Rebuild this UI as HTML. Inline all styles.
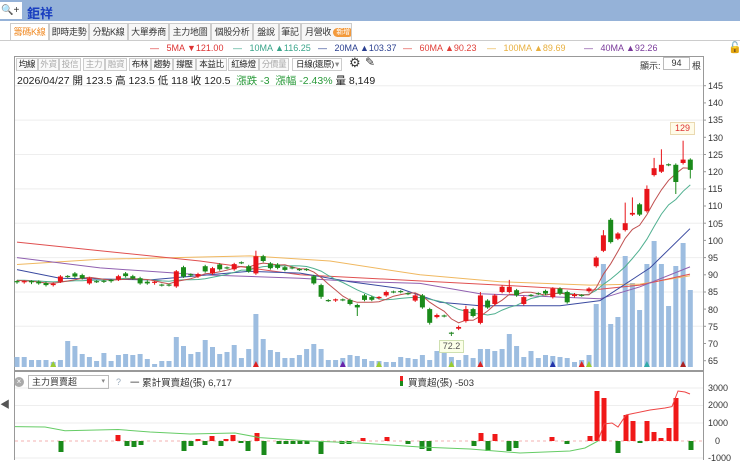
<!DOCTYPE html>
<html><head><meta charset="utf-8">
<style>
*{margin:0;padding:0;box-sizing:border-box}
body{width:740px;height:460px;overflow:hidden;background:#fff;font-family:"Liberation Sans","Noto Sans CJK TC",sans-serif;position:relative;color:#333}
.abs{position:absolute;white-space:nowrap}
#top{left:0;top:0;width:740px;height:21px;background:#95b2d8}
#mag{left:0;top:2px;width:22px;height:17px;background:#fff;font-size:10px;line-height:17px;padding-left:1px;color:#333;overflow:hidden}
#name{left:27px;top:3px;font-size:13px;font-weight:bold;color:#1a3fc0}
.tab{position:absolute;top:23px;height:18px;border:1px solid #ccc;border-bottom:none;background:#f7f7f7;font-size:9px;line-height:17px;text-align:center;color:#333;white-space:nowrap;overflow:hidden;letter-spacing:-0.3px}
.tab.sel{background:#fff;color:#f08a24}
#tabline{left:0;top:40px;width:740px;height:1px;background:#ccc}
.leg{position:absolute;top:43px;font-size:9px;white-space:nowrap}
#box{left:14px;top:56px;width:690px;height:315px;border:1px solid #999;border-right:none}
.btn{position:absolute;top:58px;height:13px;border:1px solid #ccc;font-size:8.5px;line-height:11px;text-align:center;color:#222;background:#fafafa;white-space:nowrap;overflow:hidden;letter-spacing:-0.3px}
.btn.g{color:#aaa}
#info{left:17px;top:73px;font-size:10.5px;white-space:nowrap;color:#222}
.ax{position:absolute;left:708px;font-size:9px;color:#333}
</style></head><body>
<div id="top" class="abs"></div>
<div id="mag" class="abs">&#128269;+</div>
<div id="name" class="abs">鉅祥</div>
<div class="tab sel" style="left:10px;width:39px">籌碼K線</div>
<div class="tab" style="left:49px;width:40px">即時走勢</div>
<div class="tab" style="left:89px;width:39px">分點K線</div>
<div class="tab" style="left:128px;width:41px">大單券商</div>
<div class="tab" style="left:169px;width:42px">主力地圖</div>
<div class="tab" style="left:211px;width:42px">個股分析</div>
<div class="tab" style="left:253px;width:26px">盤說</div>
<div class="tab" style="left:279px;width:22px">筆記</div>
<div class="tab" style="left:301px;width:51px;text-align:left;padding-left:3px">月營收 <span style="display:inline-block;background:#f39a3c;color:#fff;border-radius:6px;font-size:7px;line-height:9px;padding:0 3px;vertical-align:1px">新增</span></div>
<div id="tabline" class="abs"></div>

<div class="leg" style="left:150px;color:#d33">—&nbsp;&nbsp; 5MA ▼121.00</div>
<div class="leg" style="left:233px;color:#3aa58a">—&nbsp;&nbsp; 10MA ▲116.25</div>
<div class="leg" style="left:318px;color:#2a3f8f">—&nbsp;&nbsp; 20MA ▲103.37</div>
<div class="leg" style="left:403px;color:#e0403a">—&nbsp;&nbsp; 60MA ▲90.23</div>
<div class="leg" style="left:487px;color:#e8b040">—&nbsp;&nbsp; 100MA ▲89.69</div>
<div class="leg" style="left:584px;color:#7a3a9a">—&nbsp;&nbsp; 40MA ▲92.26</div>
<div class="abs" style="left:728px;top:41px;font-size:11px">🔓</div>

<div id="box" class="abs"></div>
<div class="btn" style="left:16px;width:22px">均線</div>
<div class="btn g" style="left:38px;width:21px">外資</div>
<div class="btn g" style="left:59px;width:22px">投信</div>
<div class="btn g" style="left:83px;width:22px">主力</div>
<div class="btn g" style="left:105px;width:22px">融資</div>
<div class="btn" style="left:129px;width:22px">布林</div>
<div class="btn" style="left:151px;width:22px">趨勢</div>
<div class="btn" style="left:173px;width:23px">撐壓</div>
<div class="btn" style="left:196px;width:31px">本益比</div>
<div class="btn" style="left:228px;width:31px">紅綠燈</div>
<div class="btn g" style="left:259px;width:30px">分價量</div>
<div class="btn" style="left:292px;width:50px;text-align:left;padding-left:3px;background:#fff">日線(還原)<span style="float:right;color:#888;margin-right:2px">▾</span></div>
<div class="abs" style="left:349px;top:55px;font-size:13px">⚙</div>
<div class="abs" style="left:365px;top:55px;font-size:12px">✎</div>
<div class="abs" style="left:640px;top:59px;font-size:9px">顯示:</div>
<div class="abs" style="left:663px;top:57px;width:27px;height:13px;border:1px solid #bbb;font-size:9px;text-align:center;line-height:11px">94</div>
<div class="abs" style="left:692px;top:59px;font-size:9px">根</div>
<div id="info" class="abs">2026/04/27 開 123.5 高 123.5 低 118 收 120.5 <span style="color:#2a9a3a">&nbsp;漲跌 -3 &nbsp;漲幅 -2.43%</span> 量 8,149</div>

<svg id="sv" class="abs" style="left:0;top:0" width="740" height="460"></svg>

<div class="abs" style="left:14px;top:377px;width:10px;height:10px;border-radius:5px;background:#aaa;color:#fff;font-size:8px;line-height:10px;text-align:center">×</div>
<div class="abs" style="left:28px;top:375px;width:81px;height:14px;border:1px solid #bbb;font-size:9px;line-height:12px;padding-left:3px">主力買賣超<span style="float:right;color:#888;margin-right:3px;font-size:7px">▾</span></div>
<div class="abs" style="left:116px;top:377px;font-size:9px;color:#9ab">?</div>
<div class="abs" style="left:130px;top:375px;font-size:9.5px">一 累計買賣超(張) 6,717</div>
<div class="abs" style="left:400px;top:376px;width:3px;height:5px;background:#e22"></div>
<div class="abs" style="left:400px;top:381px;width:3px;height:5px;background:#1a8a1a"></div>
<div class="abs" style="left:408px;top:375px;font-size:9.5px">買賣超(張) -503</div>
<div class="abs" style="left:0;top:396px;font-size:10px;color:#555">◀</div>

<div class="ax" style="top:81px">145</div>
<div class="ax" style="top:98px">140</div>
<div class="ax" style="top:115px">135</div>
<div class="ax" style="top:133px">130</div>
<div class="ax" style="top:150px">125</div>
<div class="ax" style="top:167px">120</div>
<div class="ax" style="top:184px">115</div>
<div class="ax" style="top:201px">110</div>
<div class="ax" style="top:219px">105</div>
<div class="ax" style="top:236px">100</div>
<div class="ax" style="top:253px">95</div>
<div class="ax" style="top:270px">90</div>
<div class="ax" style="top:287px">85</div>
<div class="ax" style="top:305px">80</div>
<div class="ax" style="top:322px">75</div>
<div class="ax" style="top:339px">70</div>
<div class="ax" style="top:356px">65</div>
<div class="ax" style="top:383px">3000</div>
<div class="ax" style="top:400px">2000</div>
<div class="ax" style="top:418px">1000</div>
<div class="ax" style="top:436px;left:715px">0</div>
<div class="ax" style="top:453px">-1000</div>
<div class="abs" style="left:670px;top:122px;width:25px;height:13px;border:1px solid #ead9b0;background:#fffbe8;color:#d33;font-size:9px;text-align:center;line-height:11px">129</div>
<div class="abs" style="left:439px;top:340px;width:25px;height:13px;border:1px solid #cfe0b0;background:#fbffe8;color:#555;font-size:9px;text-align:center;line-height:11px">72.2</div>

<script>
var S=document.getElementById('sv'),h='';
function Y(p){return 137.3+(130-p)*3.437}
function X(i){return 17+7.24*i}
h+='<line x1="703.5" y1="56" x2="703.5" y2="460" stroke="#999"/>';
for(var p=75;p<=145;p+=10)h+='<line x1="15" x2="703" y1="'+Y(p).toFixed(1)+'" y2="'+Y(p).toFixed(1)+'" stroke="#eee"/>';
for(var p=65;p<=145;p+=5)h+='<line x1="703" x2="706" y1="'+Y(p).toFixed(1)+'" y2="'+Y(p).toFixed(1)+'" stroke="#999"/>';
h+='<line x1="14.5" y1="372" x2="14.5" y2="460" stroke="#999"/>';
h+='<line x1="14" x2="703" y1="371.5" y2="371.5" stroke="#999"/>';
[388,405.5,423,458].forEach(function(y){h+='<line x1="15" x2="703" y1="'+y+'" y2="'+y+'" stroke="#eee"/>'});
var D=[[88,87.8],[87.8,88],[88,87.7],[88,87.5],[87.6,87],[87,87.4],[88,89.5],[89.5,89.5],[90.4,89.5],[89.9,89],[87.5,89],[88,88],[88,88.1],[88.3,88.1],[88.6,89.6],[90.4,89.6],[89.6,88.9],[89,87.5],[88,87.5],[87.5,87.8],[87,87],[87,87],[86.6,91],[92.2,89.5],[90,89.8],[89.5,90.2],[92.5,91],[90.4,91.9],[93,91.6],[92,92],[91.6,93.1],[93.5,93.5],[92.5,91],[90.4,95.4],[95.4,94],[93.3,91.9],[93,92],[92.2,91.4],[92,92],[91.5,91.5],[91.5,91.5],[89.6,87.5],[87,83.6],[82.5,82.5],[82.5,82.7],[82.7,82.7],[82.7,81.5],[81.2,80.5],[84,82.7],[83.5,82.7],[83.2,83.4],[84,85],[85,85],[85,85.1],[84.5,84.5],[82.5,84],[84,80.5],[80,76],[77.7,78.3],[78,78],[73,73],[74.3,74.8],[76.5,80],[80,78],[76,84],[82.5,80.5],[81.5,84],[85,86.5],[85,86.5],[85.5,84],[81.5,83.5],[84,84],[84.5,84.5],[85.3,84.5],[83.5,86],[86,84.5],[85,82],[83.8,84.3],[84,84],[85.2,86],[92.5,95],[97,101.5],[106,99.5],[100.5,102],[103,105],[107.5,108],[110.5,107.5],[108.5,115],[119,121],[120,122],[122,122],[122,117],[122.5,123.5],[123.5,120.5]];
var HI={92:129,88:124,89:126.5,87:116,84:111,85:112.5,33:97,68:88.5,81:103,82:106.5,62:81,64:85},LO={91:113.5,60:72.2,93:118,47:78,42:83,57:75.5};
var V=[10,10,7,7,7,5,7,26,21,13,10,6,14,6,12,13,12,13,8,3,6,6,30,21,13,15,27,20,13,15,22,9,18,53,28,17,15,9,9,12,18,23,18,7,7,9,12,11,8,6,6,5,5,10,9,8,12,7,16,19,10,7,12,9,18,18,16,18,33,21,10,16,9,12,11,10,9,5,7,12,63,103,43,50,111,84,57,103,126,103,61,101,124,77];
for(var i=0;i<94;i++){var x=X(i);h+='<rect x="'+(x-2.5).toFixed(1)+'" y="'+(367-V[i])+'" width="5" height="'+V[i]+'" fill="#9dbde0"/>';}
[[5,'#9c3'],[33,'#d22'],[50,'#9c3'],[60,'#9c3'],[64,'#d22'],[74,'#23a'],[78,'#d22'],[79,'#9c3'],[87,'#3aa'],[92,'#a22'],[45,'#62a']].forEach(function(m){var x=X(m[0]);h+='<polygon points="'+(x-3)+',367 '+(x+3)+',367 '+x+',361" fill="'+m[1]+'"/>'});
function pl(pts,c){h+='<polyline fill="none" stroke="'+c+'" stroke-width="1" points="'+pts.map(function(q){return q[0]+','+Y(q[1]).toFixed(1)}).join(' ')+'"/>'}
pl([[17,93],[100,94.5],[250,95.5],[330,94],[420,90],[500,88],[590,87],[640,87.3],[690,89.7]],'#f0b860');
pl([[17,99.5],[100,97],[200,94],[300,90],[400,88.5],[500,87],[590,85.5],[640,87],[690,90.2]],'#e05050');
pl([[17,95],[100,92],[200,90],[300,89],[360,88],[420,87.5],[480,84.5],[560,83.5],[600,83],[640,86.5],[690,92.3]],'#9060b0');
pl([[17,91.5],[60,89],[150,88.5],[250,91],[300,90.5],[350,88],[400,86],[440,82],[480,81],[560,81],[600,82.5],[650,92],[690,103.4]],'#3a4aa0');
var C=D.map(function(d){return d[1]});
function ma(n){var r=[];for(var i=0;i<94;i++){var s=0;for(var k=0;k<n;k++){var j=i-k;s+=j<0?88.5:C[j];}r.push([X(i).toFixed(1),s/n]);}return r}
pl(ma(10),'#50b090');pl(ma(5),'#c05050');
for(var i=0;i<94;i++){var o=D[i][0],c=D[i][1],x=X(i),up=c>o,eq=Math.abs(c-o)<0.15;var col=eq?'#2a8a2a':(up?'#e8141a':'#1a8a1a');
var hi=HI[i]||Math.max(o,c)+0.4,lo=LO[i]||Math.min(o,c)-0.4;
h+='<line x1="'+x.toFixed(1)+'" x2="'+x.toFixed(1)+'" y1="'+Y(hi).toFixed(1)+'" y2="'+Y(lo).toFixed(1)+'" stroke="'+col+'"/>';
var t=Y(Math.max(o,c)),b=Y(Math.min(o,c));if(b-t<1.2){t-=0.6;b=t+1.2}
h+='<rect x="'+(x-2.5).toFixed(1)+'" y="'+t.toFixed(1)+'" width="5" height="'+(b-t).toFixed(1)+'" fill="'+col+'"/>';}
h+='<line x1="15" x2="703" y1="441" y2="441" stroke="#f3b0b0" stroke-dasharray="3,3"/>';
var B=[[61,-11],[118,6],[127,-5],[134,-6],[141,-4],[184,-10],[191,-5],[198,2],[205,-4],[212,5],[221,-5],[226,2],[233,6],[241,-2],[248,-10],[257,8],[264,-14],[279,-3],[286,-3],[293,-3],[300,-3],[307,-3],[321,-13],[342,-3],[349,-3],[363,3],[387,4],[408,-3],[422,-8],[429,-10],[474,-5],[481,8],[488,-10],[495,7],[509,-10],[516,-7],[552,4],[567,-3],[590,5],[597,50],[604,43],[618,-12],[626,26],[633,20],[640,-2],[647,20],[654,9],[661,3],[669,13],[676,43],[691,-9]];
B.forEach(function(b){var v=b[1];h+='<rect x="'+(b[0]-2.5)+'" y="'+(v>0?441-v:441)+'" width="5" height="'+Math.abs(v)+'" fill="'+(v>0?'#f01818':'#1a8a1a')+'"/>'});
h+='<polyline fill="none" stroke="#6c6" stroke-width="1" points="15,426.6 45,427 65,430.7 118,429.5 150,432 190,434 235,433 260,437.6 310,441 360,443 420,447 470,449 520,453 570,451 585,448 598,441"/>';
h+='<polyline fill="none" stroke="#e44" stroke-width="1" points="598,441 604,424 612,423 618,427 626,415 650,410 665,408 672,406.6 678,391 685,392 690,394"/>';
S.innerHTML=h;
</script>
</body></html>
